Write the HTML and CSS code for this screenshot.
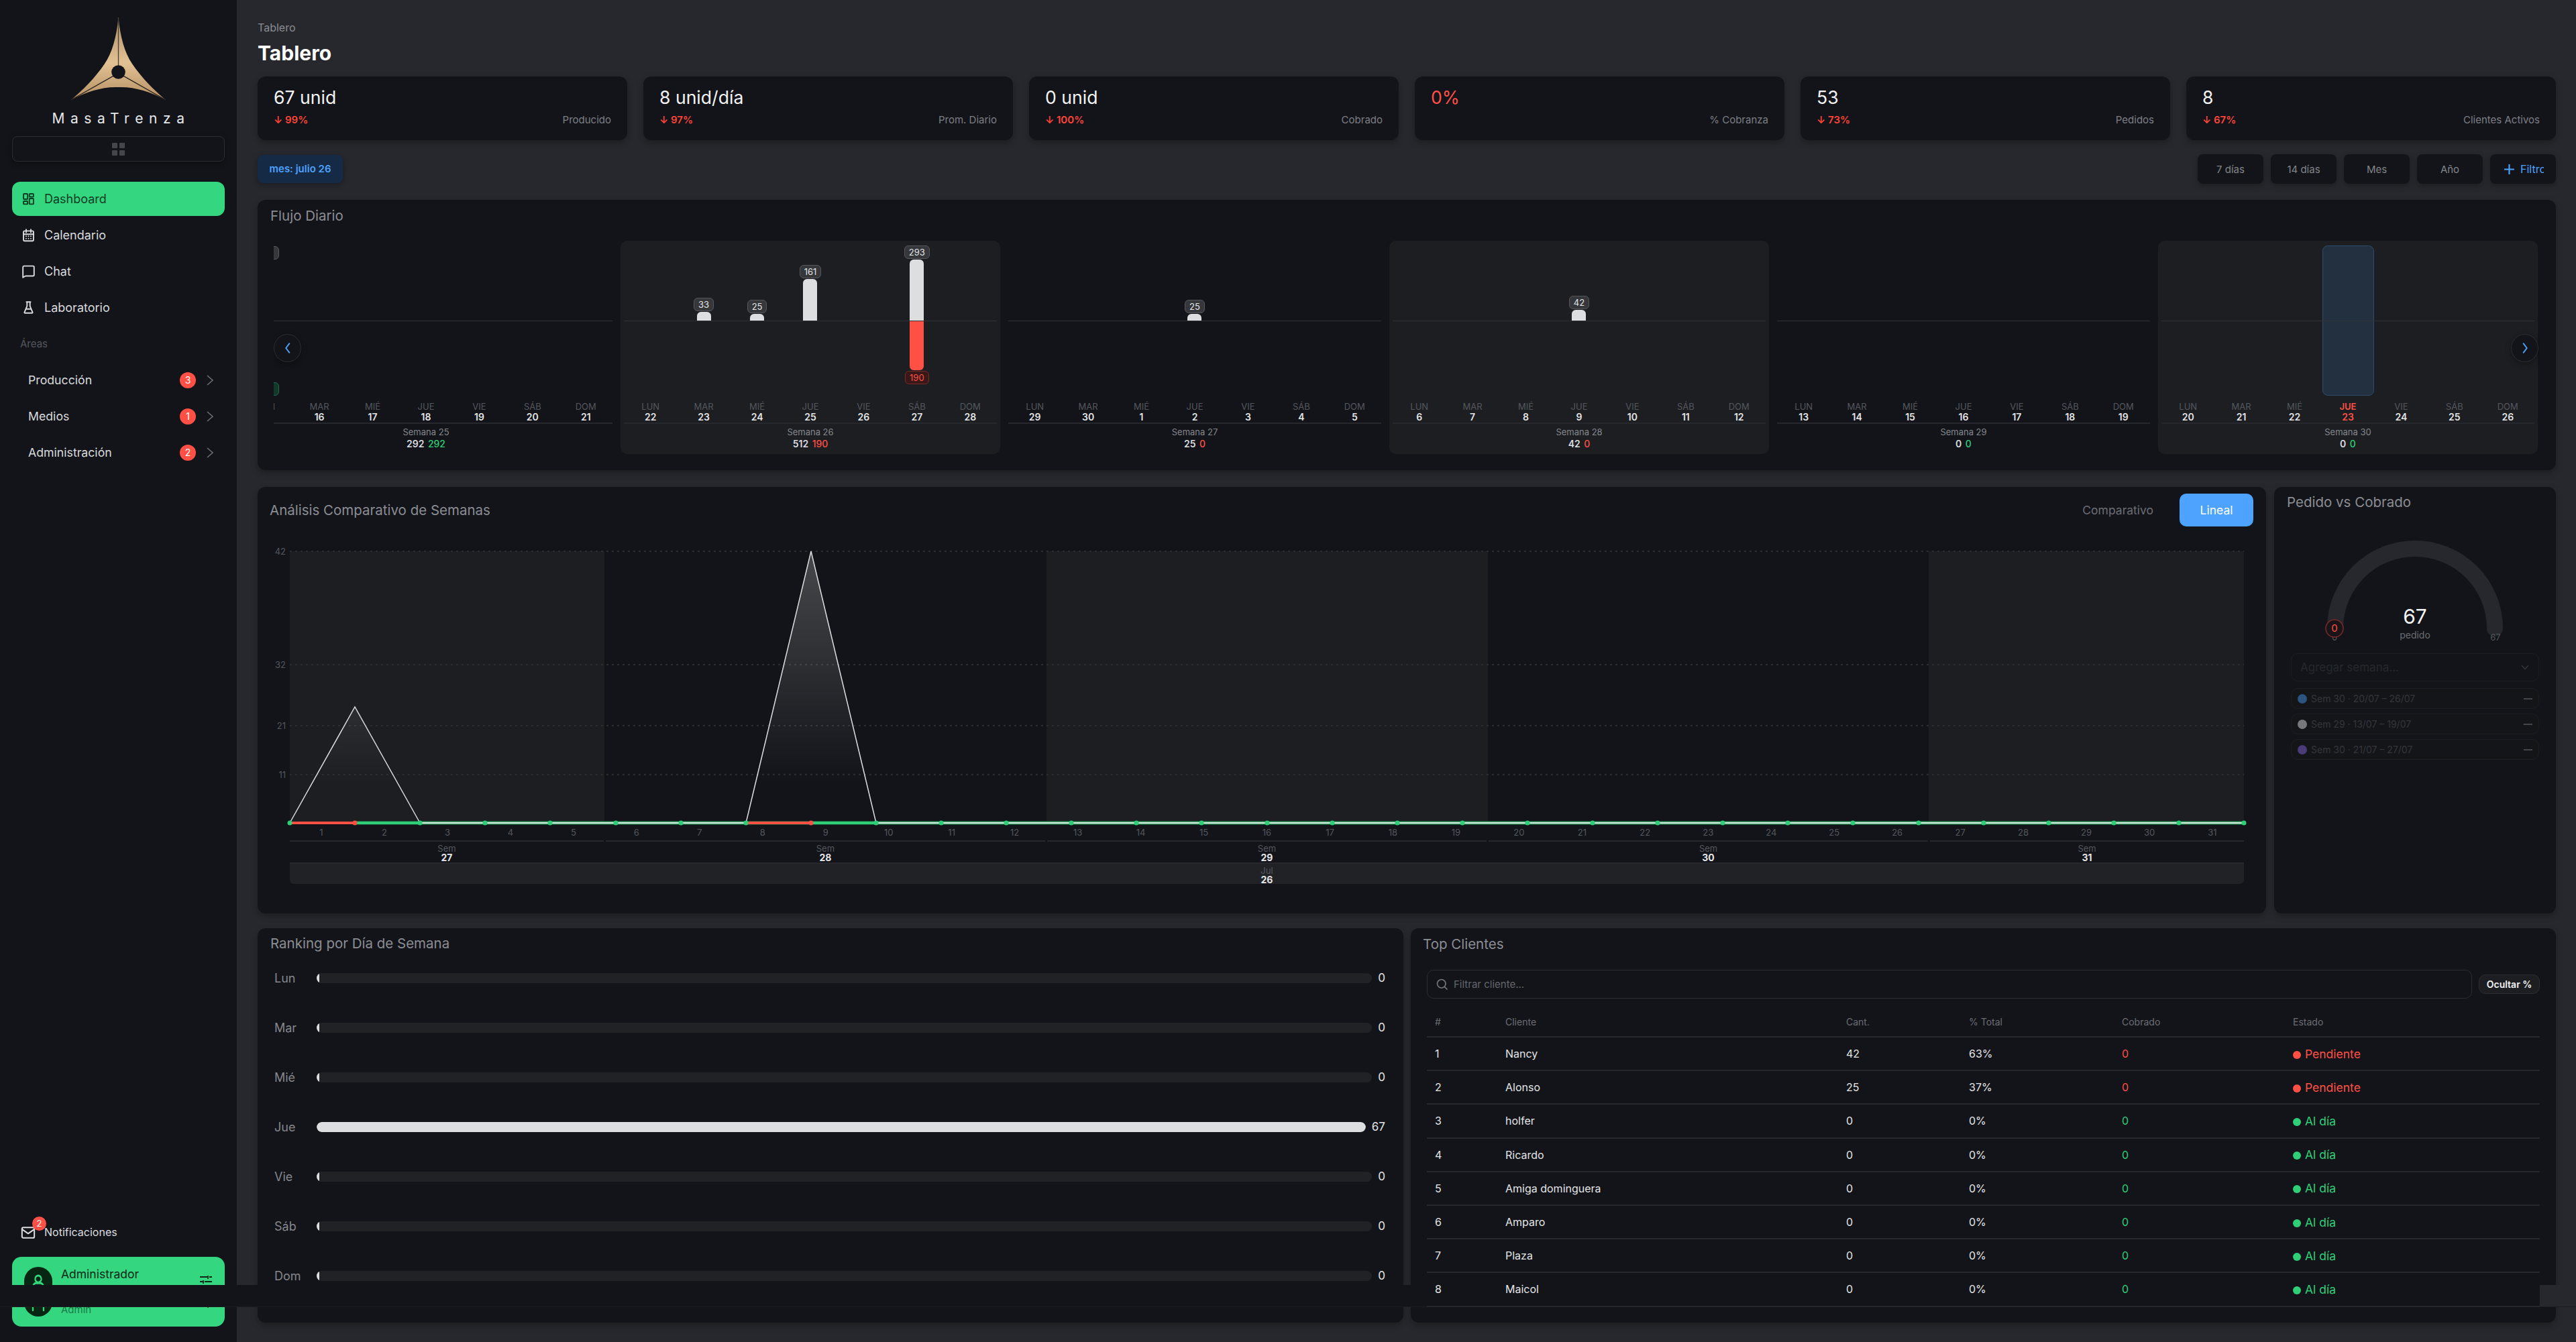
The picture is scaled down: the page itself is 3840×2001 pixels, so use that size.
FILE: index.html
```html
<!DOCTYPE html>
<html lang="es">

<head>
    <meta charset="utf-8">
    <title>MasaTrenza - Tablero</title>
    <link rel="stylesheet" href="styles.css">
</head>

<body>

    <aside class="sidebar">
        <svg class="logo" viewBox="78 30 424 370">
            <defs>
                <linearGradient id="gold" x1="0" y1="0" x2="0" y2="1">
                    <stop offset="0" stop-color="#a98a66"/>
                    <stop offset="0.55" stop-color="#e2c193"/>
                    <stop offset="1" stop-color="#b48f63"/>
                </linearGradient>
            </defs>
            <path fill="url(#gold)" d="M290 30C298 115 318 190 352 238C392 298 452 358 502 400C430 362 360 340 290 343C220 340 150 362 78 400C128 358 188 298 228 238C262 190 282 115 290 30Z"/>
            <path stroke="#4a4238" stroke-width="4" fill="none" d="M290 30V250"/>
            <path stroke="#2a2520" stroke-width="4" fill="none" d="M78 400L268 292M502 400L312 292"/>
            <circle cx="290" cy="275" r="31" fill="#121419"/>
        </svg>
        <div class="brand">MasaTrenza</div>
        <div class="side-toggle">
            <span class="grid-icon"><i></i><i></i><i></i><i></i></span>
        </div>

        <nav class="side-nav">
            <a class="nav-item active">
                <svg class="ico" viewBox="0 0 24 24"><rect x="3.5" y="3.5" width="7" height="9" rx="1"/><rect x="3.5" y="16" width="7" height="5" rx="1"/><rect x="13.5" y="11.5" width="7" height="9.5" rx="1"/><rect x="13.5" y="3.5" width="7" height="5" rx="1"/></svg>
                Dashboard
            </a>
            <a class="nav-item">
                <svg class="ico" viewBox="0 0 24 24"><rect x="3.5" y="5" width="17" height="17" rx="2"/><path d="M8 2.5v5M16 2.5v5M3.5 10.5h17M8 14h.01M12 14h.01M16 14h.01M8 18h.01M12 18h.01M16 18h.01"/></svg>
                Calendario
            </a>
            <a class="nav-item">
                <svg class="ico" viewBox="0 0 24 24"><path d="M2.5 22.5V5a2 2 0 0 1 2-2h15a2 2 0 0 1 2 2v13a2 2 0 0 1-2 2H7z"/></svg>
                Chat
            </a>
            <a class="nav-item">
                <svg class="ico" viewBox="0 0 24 24"><path d="M8.5 2.5h7M9.5 2.5v7l-4.4 10.6a1 1 0 0 0 1 1.4h11.8a1 1 0 0 0 1-1.4L14.5 9.5v-7M8 14.5h8"/></svg>
                Laboratorio
            </a>
        </nav>

        <div class="side-label">Áreas</div>

        <nav class="side-areas">
            <a class="area-item">Producción <span class="count">3</span><svg class="chev" viewBox="0 0 14 24"><path d="M3 5l8 7-8 7"/></svg></a>
            <a class="area-item">Medios <span class="count">1</span><svg class="chev" viewBox="0 0 14 24"><path d="M3 5l8 7-8 7"/></svg></a>
            <a class="area-item">Administración <span class="count">2</span><svg class="chev" viewBox="0 0 14 24"><path d="M3 5l8 7-8 7"/></svg></a>
        </nav>

        <a class="notif">
            <svg class="ico" viewBox="0 0 24 24"><rect x="2" y="4" width="20" height="17" rx="2"/><path d="M2 7l10 7 10-7"/></svg>
            Notificaciones
            <span class="notif-badge">2</span>
        </a>

        <div class="user-card">
            <div class="user-avatar">
                <svg viewBox="0 0 24 48" preserveAspectRatio="none"><ellipse cx="12" cy="8.3" rx="5" ry="4.2"/><path d="M3.3 48V19a5 5 0 0 1 5-5.5h7.4a5 5 0 0 1 5 5.5v29"/></svg>
            </div>
            <div class="user-text">
                <span class="user-name">Administrador</span>
                <span class="user-role">Admin</span>
            </div>
            <svg class="user-tune" viewBox="0 0 20 50" preserveAspectRatio="none"><path d="M1 3h11M15 3h4M13 1v5M1 10h4M8 10h11M6 8v5M1 17h13M17 17h2M15 15v5M1 47h11M15 47h4M13 44v5"/></svg>
        </div>
    </aside>

    <main class="content">
        <div class="crumb">Tablero</div>
        <h1>Tablero</h1>

        <section class="kpis">
            <div class="kpi"><div class="kpi-val">67 unid</div><div class="kpi-sub"><b class="down">↓ 99%</b><span>Producido</span></div></div>
            <div class="kpi"><div class="kpi-val">8 unid/día</div><div class="kpi-sub"><b class="down">↓ 97%</b><span>Prom. Diario</span></div></div>
            <div class="kpi"><div class="kpi-val">0 unid</div><div class="kpi-sub"><b class="down">↓ 100%</b><span>Cobrado</span></div></div>
            <div class="kpi"><div class="kpi-val red">0%</div><div class="kpi-sub"><b></b><span>% Cobranza</span></div></div>
            <div class="kpi"><div class="kpi-val">53</div><div class="kpi-sub"><b class="down">↓ 73%</b><span>Pedidos</span></div></div>
            <div class="kpi"><div class="kpi-val">8</div><div class="kpi-sub"><b class="down">↓ 67%</b><span>Clientes Activos</span></div></div>
        </section>

        <section class="filters">
            <span class="chip">mes: julio 26</span>
            <div class="ranges">
                <button>7 días</button>
                <button>14 días</button>
                <button>Mes</button>
                <button>Año</button>
                <button class="add"><span class="add-in"><svg viewBox="0 0 16 16"><path d="M8 1v14M1 8h14"/></svg>Filtro</span></button>
            </div>
        </section>

        <section class="card flow">
            <h2>Flujo Diario</h2>
            <div class="flow-view">
                <div class="flow-track">

                    <div class="week">
                        <div class="plot up">
                            <div class="col"><span class="tag">292</span><i class="bar"></i></div>
                            <div></div><div></div><div></div><div></div><div></div><div></div>
                        </div>
                        <div class="plot dn">
                            <div class="col"><i class="bar neg-g"></i><span class="tag tag-g">292</span></div>
                            <div></div><div></div><div></div><div></div><div></div><div></div>
                        </div>
                        <div class="days">
                            <div>LUN<b>15</b></div><div>MAR<b>16</b></div><div>MIÉ<b>17</b></div><div>JUE<b>18</b></div><div>VIE<b>19</b></div><div>SÁB<b>20</b></div><div>DOM<b>21</b></div>
                        </div>
                        <div class="foot">Semana 25<b>292 <em class="g">292</em></b></div>
                    </div>

                    <div class="week alt">
                        <div class="plot up">
                            <div></div>
                            <div class="col"><span class="tag">33</span><i class="bar h13"></i></div>
                            <div class="col"><span class="tag">25</span><i class="bar h10"></i></div>
                            <div class="col"><span class="tag">161</span><i class="bar h62"></i></div>
                            <div></div>
                            <div class="col"><span class="tag">293</span><i class="bar h91"></i></div>
                            <div></div>
                        </div>
                        <div class="plot dn">
                            <div></div><div></div><div></div><div></div><div></div>
                            <div class="col"><i class="bar neg"></i><span class="tag tag-r">190</span></div>
                            <div></div>
                        </div>
                        <div class="days">
                            <div>LUN<b>22</b></div><div>MAR<b>23</b></div><div>MIÉ<b>24</b></div><div>JUE<b>25</b></div><div>VIE<b>26</b></div><div>SÁB<b>27</b></div><div>DOM<b>28</b></div>
                        </div>
                        <div class="foot">Semana 26<b>512 <em class="r">190</em></b></div>
                    </div>

                    <div class="week">
                        <div class="plot up">
                            <div></div><div></div><div></div>
                            <div class="col"><span class="tag">25</span><i class="bar h10"></i></div>
                            <div></div><div></div><div></div>
                        </div>
                        <div class="plot dn"></div>
                        <div class="days">
                            <div>LUN<b>29</b></div><div>MAR<b>30</b></div><div>MIÉ<b>1</b></div><div>JUE<b>2</b></div><div>VIE<b>3</b></div><div>SÁB<b>4</b></div><div>DOM<b>5</b></div>
                        </div>
                        <div class="foot">Semana 27<b>25 <em class="r">0</em></b></div>
                    </div>

                    <div class="week alt">
                        <div class="plot up">
                            <div></div><div></div><div></div>
                            <div class="col"><span class="tag">42</span><i class="bar h16"></i></div>
                            <div></div><div></div><div></div>
                        </div>
                        <div class="plot dn"></div>
                        <div class="days">
                            <div>LUN<b>6</b></div><div>MAR<b>7</b></div><div>MIÉ<b>8</b></div><div>JUE<b>9</b></div><div>VIE<b>10</b></div><div>SÁB<b>11</b></div><div>DOM<b>12</b></div>
                        </div>
                        <div class="foot">Semana 28<b>42 <em class="r">0</em></b></div>
                    </div>

                    <div class="week">
                        <div class="plot up"></div>
                        <div class="plot dn"></div>
                        <div class="days">
                            <div>LUN<b>13</b></div><div>MAR<b>14</b></div><div>MIÉ<b>15</b></div><div>JUE<b>16</b></div><div>VIE<b>17</b></div><div>SÁB<b>18</b></div><div>DOM<b>19</b></div>
                        </div>
                        <div class="foot">Semana 29<b>0 <em class="g">0</em></b></div>
                    </div>

                    <div class="week alt">
                        <div class="today-box"></div>
                        <div class="plot up"></div>
                        <div class="plot dn"></div>
                        <div class="days">
                            <div>LUN<b>20</b></div><div>MAR<b>21</b></div><div>MIÉ<b>22</b></div><div class="today">JUE<b>23</b></div><div>VIE<b>24</b></div><div>SÁB<b>25</b></div><div>DOM<b>26</b></div>
                        </div>
                        <div class="foot">Semana 30<b>0 <em class="g">0</em></b></div>
                    </div>

                </div>
                <button class="nav-btn prev"><svg viewBox="0 0 14 24"><path d="M10 4l-6 8 6 8"/></svg></button>
                <button class="nav-btn next"><svg viewBox="0 0 14 24"><path d="M4 4l6 8-6 8"/></svg></button>
            </div>
        </section>

        <section class="mid-row">
            <div class="card compare">
                <div class="compare-head">
                    <h2>Análisis Comparativo de Semanas</h2>
                    <div class="modes">
                        <span class="mode">Comparativo</span>
                        <span class="mode on">Lineal</span>
                    </div>
                </div>

                <svg class="line-chart" width="2960" height="420" viewBox="0 0 2960 420">
                    <defs>
                        <linearGradient id="peak" gradientUnits="userSpaceOnUse" x1="0" y1="10" x2="0" y2="415">
                            <stop offset="0" stop-color="#fff" stop-opacity="0.22"/>
                            <stop offset="0.85" stop-color="#fff" stop-opacity="0"/>
                        </linearGradient>
                    </defs>
                    <rect class="band" x="30" y="10" width="469" height="405"/>
                    <rect class="band" x="1158" y="10" width="658" height="405"/>
                    <rect class="band" x="2473" y="10" width="470" height="405"/>
                    <path class="grid" d="M30 10H2943M30 179H2943M30 270H2943M30 343H2943"/>
                    <text class="y-tick" x="24" y="15">42</text>
                    <text class="y-tick" x="24" y="184">32</text>
                    <text class="y-tick" x="24" y="275">21</text>
                    <text class="y-tick" x="24" y="348">11</text>
                    <path fill="url(#peak)" d="M30 415L127 242L224 415ZM710 415L807 10L904 415Z"/>
                    <path class="peak-line" d="M30 415L127 242L224 415M710 415L807 10L904 415"/>
                    <path class="base-g" d="M127 415H2943"/>
                    <path class="base-w" d="M224 415H710M904 415H2943"/>
                    <path class="base-g2" d="M127 415H224M807 415H904"/>
                    <path class="base-r" d="M30 415H127M710 415H807"/>
                    <g class="dots">
                        <circle cx="30" cy="415" r="3.5"/><circle class="dot-r" cx="127" cy="415" r="3.5"/><circle cx="224" cy="415" r="3.5"/><circle cx="321" cy="415" r="3.5"/><circle cx="418" cy="415" r="3.5"/><circle cx="516" cy="415" r="3.5"/><circle cx="613" cy="415" r="3.5"/><circle cx="710" cy="415" r="3.5"/><circle class="dot-r" cx="807" cy="415" r="3.5"/><circle cx="904" cy="415" r="3.5"/><circle cx="1001" cy="415" r="3.5"/><circle cx="1098" cy="415" r="3.5"/><circle cx="1195" cy="415" r="3.5"/><circle cx="1292" cy="415" r="3.5"/><circle cx="1389" cy="415" r="3.5"/><circle cx="1487" cy="415" r="3.5"/><circle cx="1584" cy="415" r="3.5"/><circle cx="1681" cy="415" r="3.5"/><circle cx="1778" cy="415" r="3.5"/><circle cx="1875" cy="415" r="3.5"/><circle cx="1972" cy="415" r="3.5"/><circle cx="2069" cy="415" r="3.5"/><circle cx="2166" cy="415" r="3.5"/><circle cx="2263" cy="415" r="3.5"/><circle cx="2360" cy="415" r="3.5"/><circle cx="2458" cy="415" r="3.5"/><circle cx="2555" cy="415" r="3.5"/><circle cx="2652" cy="415" r="3.5"/><circle cx="2749" cy="415" r="3.5"/><circle cx="2846" cy="415" r="3.5"/><circle cx="2943" cy="415" r="3.5"/>
                    </g>
                </svg>

                <div class="axis">
                    <div class="axis-days">
                        <span>1</span><span>2</span><span>3</span><span>4</span><span>5</span><span>6</span><span>7</span><span>8</span><span>9</span><span>10</span><span>11</span><span>12</span><span>13</span><span>14</span><span>15</span><span>16</span><span>17</span><span>18</span><span>19</span><span>20</span><span>21</span><span>22</span><span>23</span><span>24</span><span>25</span><span>26</span><span>27</span><span>28</span><span>29</span><span>30</span><span>31</span>
                    </div>
                    <div class="axis-weeks">
                        <div class="w5">Sem<b>27</b></div>
                        <div class="w7">Sem<b>28</b></div>
                        <div class="w7">Sem<b>29</b></div>
                        <div class="w7">Sem<b>30</b></div>
                        <div class="w5">Sem<b>31</b></div>
                    </div>
                    <div class="axis-month">Jul<b>26</b></div>
                </div>
            </div>

            <div class="card gauge">
                <h2>Pedido vs Cobrado</h2>
                <svg class="gauge-svg" width="419" height="170" viewBox="0 0 419 170">
                    <path class="gauge-arc" d="M91 147A119 119 0 0 1 329 147"/>
                    <text class="gauge-val" x="210" y="140">67</text>
                    <text class="gauge-cap" x="210" y="162">pedido</text>
                    <text class="gauge-end" x="90" y="165">0</text>
                    <text class="gauge-end" x="330" y="165">67</text>
                    <circle class="gauge-mark" cx="90" cy="147" r="13"/>
                    <text class="gauge-mark-txt" x="90" y="152">0</text>
                </svg>
                <div class="week-picker">
                    <div class="pick-select">Agregar semana...
                        <svg viewBox="0 0 20 12"><path d="M3 2l7 8 7-8"/></svg>
                    </div>
                    <div class="pick-row"><i class="pick-dot c1"></i>Sem 30 · 20/07 – 26/07<span class="pick-x"></span></div>
                    <div class="pick-row"><i class="pick-dot c2"></i>Sem 29 · 13/07 – 19/07<span class="pick-x"></span></div>
                    <div class="pick-row"><i class="pick-dot c3"></i>Sem 30 · 21/07 – 27/07<span class="pick-x"></span></div>
                </div>
            </div>
        </section>

        <section class="low-row">
            <div class="card ranking">
                <h2>Ranking por Día de Semana</h2>
                <div class="rank-list">
                    <div class="rank"><span class="rank-day">Lun</span><div class="rank-bar"><i class="rank-fill"></i></div><span class="rank-num">0</span></div>
                    <div class="rank"><span class="rank-day">Mar</span><div class="rank-bar"><i class="rank-fill"></i></div><span class="rank-num">0</span></div>
                    <div class="rank"><span class="rank-day">Mié</span><div class="rank-bar"><i class="rank-fill"></i></div><span class="rank-num">0</span></div>
                    <div class="rank"><span class="rank-day">Jue</span><div class="rank-bar"><i class="rank-fill full"></i></div><span class="rank-num">67</span></div>
                    <div class="rank"><span class="rank-day">Vie</span><div class="rank-bar"><i class="rank-fill"></i></div><span class="rank-num">0</span></div>
                    <div class="rank"><span class="rank-day">Sáb</span><div class="rank-bar"><i class="rank-fill"></i></div><span class="rank-num">0</span></div>
                    <div class="rank"><span class="rank-day">Dom</span><div class="rank-bar"><i class="rank-fill"></i></div><span class="rank-num">0</span></div>
                </div>
            </div>

            <div class="card clients">
                <h2>Top Clientes</h2>
                <div class="client-tools">
                    <div class="client-search">
                        <svg viewBox="0 0 24 24"><circle cx="10.5" cy="10.5" r="7.5"/><path d="M21 21l-5-5"/></svg>
                        Filtrar cliente...
                    </div>
                    <button class="hide-pct">Ocultar %</button>
                </div>
                <table class="client-table">
                    <thead>
                        <tr><th class="c-n">#</th><th class="c-name">Cliente</th><th class="c-qty">Cant.</th><th class="c-pct">% Total</th><th class="c-paid">Cobrado</th><th>Estado</th></tr>
                    </thead>
                    <tbody>
                        <tr><td>1</td><td>Nancy</td><td>42</td><td>63%</td><td class="r">0</td><td class="r state"><i class="st"></i>Pendiente</td></tr>
                        <tr><td>2</td><td>Alonso</td><td>25</td><td>37%</td><td class="r">0</td><td class="r state"><i class="st"></i>Pendiente</td></tr>
                        <tr><td>3</td><td>holfer</td><td>0</td><td>0%</td><td class="g">0</td><td class="g state"><i class="st"></i>Al día</td></tr>
                        <tr><td>4</td><td>Ricardo</td><td>0</td><td>0%</td><td class="g">0</td><td class="g state"><i class="st"></i>Al día</td></tr>
                        <tr><td>5</td><td>Amiga dominguera</td><td>0</td><td>0%</td><td class="g">0</td><td class="g state"><i class="st"></i>Al día</td></tr>
                        <tr><td>6</td><td>Amparo</td><td>0</td><td>0%</td><td class="g">0</td><td class="g state"><i class="st"></i>Al día</td></tr>
                        <tr><td>7</td><td>Plaza</td><td>0</td><td>0%</td><td class="g">0</td><td class="g state"><i class="st"></i>Al día</td></tr>
                        <tr><td>8</td><td>Maicol</td><td>0</td><td>0%</td><td class="g">0</td><td class="g state"><i class="st"></i>Al día</td></tr>
                    </tbody>
                </table>
            </div>
        </section>
    </main>

    <div class="stray-bar"></div>

</body>

</html>
```

FILE: styles.css
```css
* {
    box-sizing: border-box;
}

body {
    margin: 0;
    width: 3840px;
    height: 2001px;
    overflow: hidden;
    display: flex;
    position: relative;
    background-color: #26282d;
    font-family: Inter, "Liberation Sans", sans-serif;
    color: #e4e5e7;
}

h1, h2 {
    margin: 0;
}

b, em, i {
    font-style: normal;
}

.r { color: #ff5046; }
.g { color: #2fcf78; }

/* sidebar */
.sidebar {
    width: 353px;
    flex: none;
    height: 2001px;
    padding: 25px 18px 23px;
    display: flex;
    flex-direction: column;
    background-color: #121419;
}

.logo {
    width: 141px;
    height: 125px;
    align-self: center;
    flex: none;
}

.brand {
    margin-top: 15px;
    height: 24px;
    line-height: 24px;
    text-align: center;
    font-size: 21px;
    letter-spacing: 8.6px;
    padding-left: 8px;
    color: #e6e7e9;
}

.side-toggle {
    margin-top: 14px;
    height: 38px;
    flex: none;
    border: 1px solid #2b2d33;
    border-radius: 8px;
    display: flex;
    align-items: center;
    justify-content: center;
    box-shadow: 0 3px 8px rgba(0, 0, 0, 0.3);
}

.grid-icon {
    display: grid;
    grid-template-columns: 8px 8px;
    grid-template-rows: 8px 8px;
    gap: 3px;
}

.grid-icon i {
    background-color: #44464c;
    border-radius: 1px;
}

.side-nav {
    margin-top: 30px;
    display: flex;
    flex-direction: column;
    gap: 3px;
}

.ico {
    width: 21px;
    height: 23px;
    flex: none;
    fill: none;
    stroke: currentColor;
    stroke-width: 2.2;
    stroke-linecap: round;
    stroke-linejoin: round;
}

.nav-item {
    height: 51px;
    padding-left: 14px;
    display: flex;
    align-items: center;
    gap: 13px;
    font-size: 18px;
    border-radius: 12px;
    color: #d9dadd;
}

.nav-item.active {
    background-color: #34d67f;
    color: #0b3d24;
}

.side-label {
    margin: 19px 0 0 12px;
    height: 20px;
    line-height: 20px;
    font-size: 15px;
    color: #55575e;
}

.side-areas {
    margin-top: 18px;
    display: flex;
    flex-direction: column;
    gap: 3px;
}

.area-item {
    height: 51px;
    padding: 0 15px 0 24px;
    display: flex;
    align-items: center;
    font-size: 17.7px;
    color: #d9dadd;
}

.count {
    margin-left: auto;
    width: 24px;
    height: 24px;
    border-radius: 50%;
    background-color: #ff5046;
    color: #fff;
    font-size: 14px;
    line-height: 24px;
    text-align: center;
}

.chev {
    width: 14px;
    height: 24px;
    margin-left: 14px;
    fill: none;
    stroke: #6c6e74;
    stroke-width: 1.6;
}

.notif {
    margin-top: auto;
    height: 26px;
    padding-left: 13px;
    display: flex;
    align-items: center;
    gap: 13px;
    font-size: 16px;
    color: #dcdde0;
    position: relative;
}

.notif .ico {
    width: 22px;
}

.notif-badge {
    position: absolute;
    left: 30px;
    top: -10px;
    width: 21px;
    height: 21px;
    border-radius: 50%;
    background-color: #ff5046;
    color: #fff;
    font-size: 13px;
    line-height: 21px;
    text-align: center;
}

.user-card {
    margin-top: 24px;
    height: 104px;
    flex: none;
    padding: 15px 18px;
    display: flex;
    gap: 13px;
    border-radius: 14px;
    background-color: #34d67f;
}

.user-avatar {
    width: 42px;
    border-radius: 21px;
    background-color: #062512;
    display: flex;
    align-items: flex-start;
    justify-content: center;
    padding-top: 8px;
    flex: none;
}

.user-avatar svg {
    width: 22px;
    height: 58px;
    fill: none;
    stroke: #34d67f;
    stroke-width: 2.4;
}

.user-text {
    flex: 1;
    display: flex;
    flex-direction: column;
    justify-content: space-between;
}

.user-name {
    font-size: 17.5px;
    line-height: 22px;
    color: #0a2716;
}

.user-role {
    font-size: 15px;
    line-height: 20px;
    color: #1a7a48;
}

.user-tune {
    width: 20px;
    height: 50px;
    margin-top: 12px;
    fill: none;
    stroke: #0a2716;
    stroke-width: 1.8;
}

/* main */
.content {
    flex: 1;
    min-width: 0;
    padding: 32px 30px 0 31px;
}

.crumb {
    height: 18px;
    line-height: 18px;
    font-size: 16px;
    color: #8a8c92;
}

h1 {
    margin-top: 12px;
    height: 34px;
    line-height: 34px;
    font-size: 30px;
    font-weight: 700;
    color: #fff;
}

.kpis {
    margin-top: 18px;
    display: grid;
    grid-template-columns: repeat(6, 1fr);
    gap: 24px;
}

.kpi {
    height: 95px;
    padding: 14px 24px 0;
    border-radius: 12px;
    background-color: #121419;
    box-shadow: 0 4px 10px rgba(0, 0, 0, 0.28);
}

.kpi-val {
    height: 34px;
    line-height: 34px;
    font-size: 26.6px;
    color: #f3f3f4;
}

.kpi-val.red {
    color: #ff5046;
}

.kpi-sub {
    margin-top: 7px;
    display: flex;
    justify-content: space-between;
    font-size: 15px;
    color: #7d7f85;
}

.down {
    color: #ff4438;
    font-weight: 600;
}

.filters {
    margin-top: 21px;
    height: 44px;
    display: flex;
    justify-content: space-between;
    align-items: center;
}

.chip {
    width: 127px;
    height: 42px;
    line-height: 42px;
    text-align: center;
    font-size: 15px;
    font-weight: 600;
    border-radius: 8px;
    background-color: #152a45;
    color: #4da3ff;
    box-shadow: 0 3px 8px rgba(0, 0, 0, 0.28);
}

.ranges {
    display: flex;
    gap: 11px;
}

.ranges button {
    width: 98px;
    height: 44px;
    padding: 0;
    border: 0;
    border-radius: 8px;
    background-color: #121419;
    color: #82848a;
    font-family: inherit;
    font-size: 15px;
    white-space: nowrap;
    box-shadow: 0 3px 8px rgba(0, 0, 0, 0.28);
}

.ranges .add {
    color: #4da3ff;
    padding-left: 20px;
}

.add-in {
    display: flex;
    align-items: center;
    gap: 8px;
    width: 60px;
    overflow: hidden;
    font-size: 16px;
}

.add-in svg {
    width: 17px;
    height: 17px;
    flex: none;
    fill: none;
    stroke: currentColor;
    stroke-width: 2;
}

.card {
    border-radius: 12px;
    background-color: #121419;
    box-shadow: 0 4px 10px rgba(0, 0, 0, 0.28);
}

h2 {
    font-size: 20.5px;
    font-weight: 400;
    line-height: 26px;
    color: #8b8d93;
}

/* flujo diario */
.flow {
    margin-top: 24px;
    height: 403px;
    padding: 11px 24px 0;
}

.flow h2 {
    margin-left: -5px;
}

.flow-view {
    margin-top: 24px;
    height: 318px;
    overflow: hidden;
    position: relative;
}

.flow-track {
    margin-left: -56px;
    display: flex;
    gap: 7px;
}

.week {
    width: 566px;
    height: 318px;
    flex: none;
    padding: 0 5px;
    border-radius: 10px;
    position: relative;
}

.week.alt {
    background-color: #1c1e22;
}

.today-box {
    position: absolute;
    left: 245px;
    top: 7px;
    width: 77px;
    height: 224px;
    border: 1px solid #2c4a6a;
    border-radius: 8px;
    background-color: #22303f;
}

.plot {
    display: grid;
    grid-template-columns: repeat(7, 1fr);
    position: relative;
}

.plot.up {
    height: 120px;
    align-items: end;
    border-bottom: 1px solid #303236;
    padding-bottom: 0;
}

.plot.dn {
    height: 117px;
}

.col {
    display: flex;
    flex-direction: column;
    align-items: center;
    gap: 1px;
}

.tag {
    height: 20px;
    line-height: 18px;
    padding: 0 6px;
    font-size: 13px;
    border: 1px solid #55575c;
    border-radius: 6px;
    background-color: #35373b;
    color: #e4e5e7;
}

.tag-r {
    background-color: #3a1818;
    border-color: #7a2a2a;
    color: #ff5046;
}

.tag-g {
    background-color: #14382a;
    border-color: #1f6b42;
    color: #2fcf78;
}

.bar {
    display: block;
    width: 21px;
    height: 90px;
    border-radius: 6px 6px 0 0;
    background-color: #dddee0;
}

.h10 { height: 10px; }
.h13 { height: 13px; }
.h16 { height: 16px; }
.h62 { height: 62px; }
.h91 { height: 91px; }

.bar.neg {
    height: 73px;
    border-radius: 0 0 6px 6px;
    background-color: #ff5046;
}

.bar.neg-g {
    border-radius: 0 0 6px 6px;
    background-color: #2fcf78;
}

.days {
    display: grid;
    grid-template-columns: repeat(7, 1fr);
    height: 36px;
    padding-top: 3px;
    text-align: center;
    font-size: 13px;
    line-height: 15px;
    color: #55575e;
    border-bottom: 2px solid #26282d;
    position: relative;
}

.days b {
    display: block;
    font-size: 14px;
    line-height: 15px;
    font-weight: 600;
    color: #e4e5e7;
}

.days .today {
    color: #ff5046;
    font-weight: 600;
}

.days .today b {
    color: #ff5046;
}

.foot {
    padding-top: 3px;
    text-align: center;
    font-size: 13px;
    line-height: 18px;
    color: #85878d;
}

.foot b {
    display: block;
    font-size: 14px;
    line-height: 18px;
    font-weight: 600;
    color: #dcdde0;
}

.foot em {
    margin-left: 2px;
    font-weight: 500;
}

.nav-btn {
    position: absolute;
    top: 139px;
    width: 41px;
    height: 42px;
    padding: 0;
    border: 1px solid #2b2d33;
    border-radius: 50%;
    background-color: #121419;
    box-shadow: 0 3px 8px rgba(0, 0, 0, 0.35);
    display: flex;
    align-items: center;
    justify-content: center;
}

.nav-btn svg {
    width: 14px;
    height: 22px;
    fill: none;
    stroke: #4da3ff;
    stroke-width: 2;
}

.nav-btn.prev { left: 0; }
.nav-btn.next { right: 2px; }

/* comparativo */
.mid-row {
    margin-top: 25px;
    display: flex;
    gap: 12px;
}

.compare {
    width: 2994px;
    height: 636px;
    padding: 10px 19px 0 18px;
}

.compare-head {
    height: 49px;
    display: flex;
    justify-content: space-between;
    align-items: center;
}

.modes {
    display: flex;
    align-items: center;
    gap: 39px;
}

.mode {
    font-size: 17.5px;
    color: #6c6e74;
}

.mode.on {
    width: 110px;
    height: 49px;
    line-height: 49px;
    text-align: center;
    border-radius: 10px;
    background-color: #4da3ff;
    color: #fff;
}

.line-chart {
    display: block;
    margin-top: 27px;
    overflow: visible;
}

.band {
    fill: #1c1e22;
}

.grid {
    fill: none;
    stroke: #2b2d31;
    stroke-width: 2;
    stroke-dasharray: 3 5;
}

.y-tick {
    font-size: 13px;
    fill: #55575e;
    text-anchor: end;
}

.peak-line {
    fill: none;
    stroke: #dddee0;
    stroke-width: 1.5;
}

.base-g {
    fill: none;
    stroke: #1f8f52;
    stroke-width: 5;
}

.base-w {
    fill: none;
    stroke: #cfe8d8;
    stroke-width: 2.5;
}

.base-g2 {
    fill: none;
    stroke: #2fcf78;
    stroke-width: 4;
}

.base-r {
    fill: none;
    stroke: #ff5046;
    stroke-width: 4;
}

.dots circle {
    fill: #2fcf78;
}

.dots .dot-r {
    fill: #ff5046;
}

.axis {
    margin-left: 30px;
    width: 2913px;
}

.axis-days {
    display: grid;
    grid-template-columns: repeat(31, 1fr);
    height: 18px;
    line-height: 18px;
    text-align: center;
    font-size: 13px;
    color: #55575e;
}

.axis-weeks {
    margin-top: 3px;
    display: flex;
    gap: 3px;
    text-align: center;
    font-size: 13px;
    line-height: 14px;
    color: #55575e;
}

.axis-weeks div {
    height: 33px;
    padding-top: 3px;
    border-top: 2px solid #26282d;
}

.axis-weeks .w5 { flex: 5; }
.axis-weeks .w7 { flex: 7; }

.axis-weeks b {
    display: block;
    font-size: 14px;
    font-weight: 700;
    color: #e4e5e7;
}

.axis-month {
    height: 32px;
    padding-top: 3px;
    border-top: 2px solid #26282d;
    border-radius: 0 0 6px 6px;
    background-color: #202226;
    text-align: center;
    font-size: 13px;
    line-height: 14px;
    color: #55575e;
}

.axis-month b {
    display: block;
    font-size: 14px;
    font-weight: 700;
    color: #e4e5e7;
}

/* gauge */
.gauge {
    flex: 1;
    height: 636px;
    padding-top: 10px;
}

.gauge h2 {
    padding-left: 19px;
}

.gauge-svg {
    display: block;
    margin-top: 28px;
}

.gauge-arc {
    fill: none;
    stroke: #26282d;
    stroke-width: 24;
    stroke-linecap: round;
}

.gauge-val {
    font-size: 30px;
    fill: #f3f3f4;
    text-anchor: middle;
}

.gauge-cap {
    font-size: 14px;
    fill: #6c6e74;
    text-anchor: middle;
}

.gauge-end {
    font-size: 13px;
    fill: #55575e;
    text-anchor: middle;
}

.gauge-mark {
    fill: #1a1416;
    stroke: #7a2a2a;
    stroke-width: 1.5;
}

.gauge-mark-txt {
    font-size: 15px;
    fill: #ff5046;
    text-anchor: middle;
}

.week-picker {
    margin: 14px 25px 0;
    display: flex;
    flex-direction: column;
    gap: 7px;
    font-size: 14px;
    color: #34363b;
}

.pick-select {
    height: 42px;
    margin-bottom: 3px;
    padding: 0 13px;
    display: flex;
    align-items: center;
    justify-content: space-between;
    font-size: 17px;
    color: #26282c;
    border: 1px solid #1c1e23;
    border-radius: 10px;
}

.pick-select svg {
    width: 14px;
    height: 10px;
    fill: none;
    stroke: #34363b;
    stroke-width: 2;
}

.pick-row {
    height: 31px;
    padding: 0 9px;
    display: flex;
    align-items: center;
    border: 1px solid #1c1e23;
    border-radius: 10px;
    background-color: #141519;
}

.pick-dot {
    width: 14px;
    height: 14px;
    margin-right: 6px;
    border-radius: 50%;
}

.c1 { background-color: #2c5480; }
.c2 { background-color: #77787c; }
.c3 { background-color: #4a3c78; }

.pick-x {
    margin-left: auto;
    width: 13px;
    height: 2px;
    background-color: #44464c;
}

/* ranking y clientes */
.low-row {
    margin-top: 22px;
    display: flex;
    gap: 11px;
}

.ranking {
    width: 1708px;
    height: 588px;
    padding-top: 10px;
}

.ranking h2 {
    padding-left: 19px;
}

.rank-list {
    margin-top: 1px;
    padding: 0 27px 0 25px;
}

.rank {
    height: 74px;
    display: flex;
    align-items: center;
    gap: 9px;
}

.rank-day {
    width: 54px;
    font-size: 18px;
    color: #85878d;
}

.rank-bar {
    flex: 1;
    height: 15px;
    border-radius: 8px;
    overflow: hidden;
    background-color: #202226;
}

.rank-fill {
    display: block;
    width: 4px;
    height: 15px;
    border-radius: 8px 0 0 8px;
    background-color: #dddee0;
}

.rank-fill.full {
    width: 100%;
    border-radius: 8px;
}

.rank-num {
    font-size: 17px;
    color: #e4e5e7;
}

.clients {
    flex: 1;
    height: 588px;
    padding: 11px 24px 0;
}

.clients h2 {
    margin-left: -6px;
}

.client-tools {
    margin-top: 25px;
    display: flex;
    align-items: center;
    gap: 10px;
}

.client-search {
    flex: 1;
    height: 43px;
    padding-left: 12px;
    display: flex;
    align-items: center;
    gap: 7px;
    border: 1px solid #2b2d33;
    border-radius: 10px;
    font-size: 15px;
    color: #65676d;
}

.client-search svg {
    width: 20px;
    height: 20px;
    fill: none;
    stroke: #76787e;
    stroke-width: 2;
}

.hide-pct {
    width: 91px;
    height: 29px;
    padding: 0;
    border: 1px solid #2b2d33;
    border-radius: 10px;
    background-color: #1c1e22;
    color: #f3f3f4;
    font-family: inherit;
    font-size: 14px;
    font-weight: 600;
}

.client-table {
    margin-top: 13px;
    width: 100%;
    table-layout: fixed;
    border-collapse: collapse;
    position: relative;
    z-index: 2;
    font-size: 16px;
}

.client-table th {
    height: 44px;
    padding-left: 12px;
    text-align: left;
    font-size: 14px;
    font-weight: 400;
    color: #6c6e74;
    border-bottom: 2px solid #26282d;
}

.client-table td {
    height: 50.2px;
    padding-left: 12px;
    border-bottom: 2px solid #26282d;
    color: #e4e5e7;
}

.client-table td.r { color: #ff5046; }
.client-table td.g { color: #2fcf78; }
.client-table td.state { font-size: 17.5px; }

.c-n { width: 105px; }
.c-name { width: 508px; }
.c-qty { width: 183px; }
.c-pct { width: 228px; }
.c-paid { width: 255px; }

.st {
    display: inline-block;
    width: 12px;
    height: 12px;
    margin-right: 6px;
    border-radius: 50%;
    background-color: currentColor;
    vertical-align: -1px;
}

/* franja que queda encima del contenido */
.stray-bar {
    position: absolute;
    left: 0;
    right: 0;
    top: 1916px;
    height: 33px;
    z-index: 1;
    background: linear-gradient(to right, #121419 3786px, #26282d 3786px);
    border-bottom: 1px solid #1b1d21;
}
```
